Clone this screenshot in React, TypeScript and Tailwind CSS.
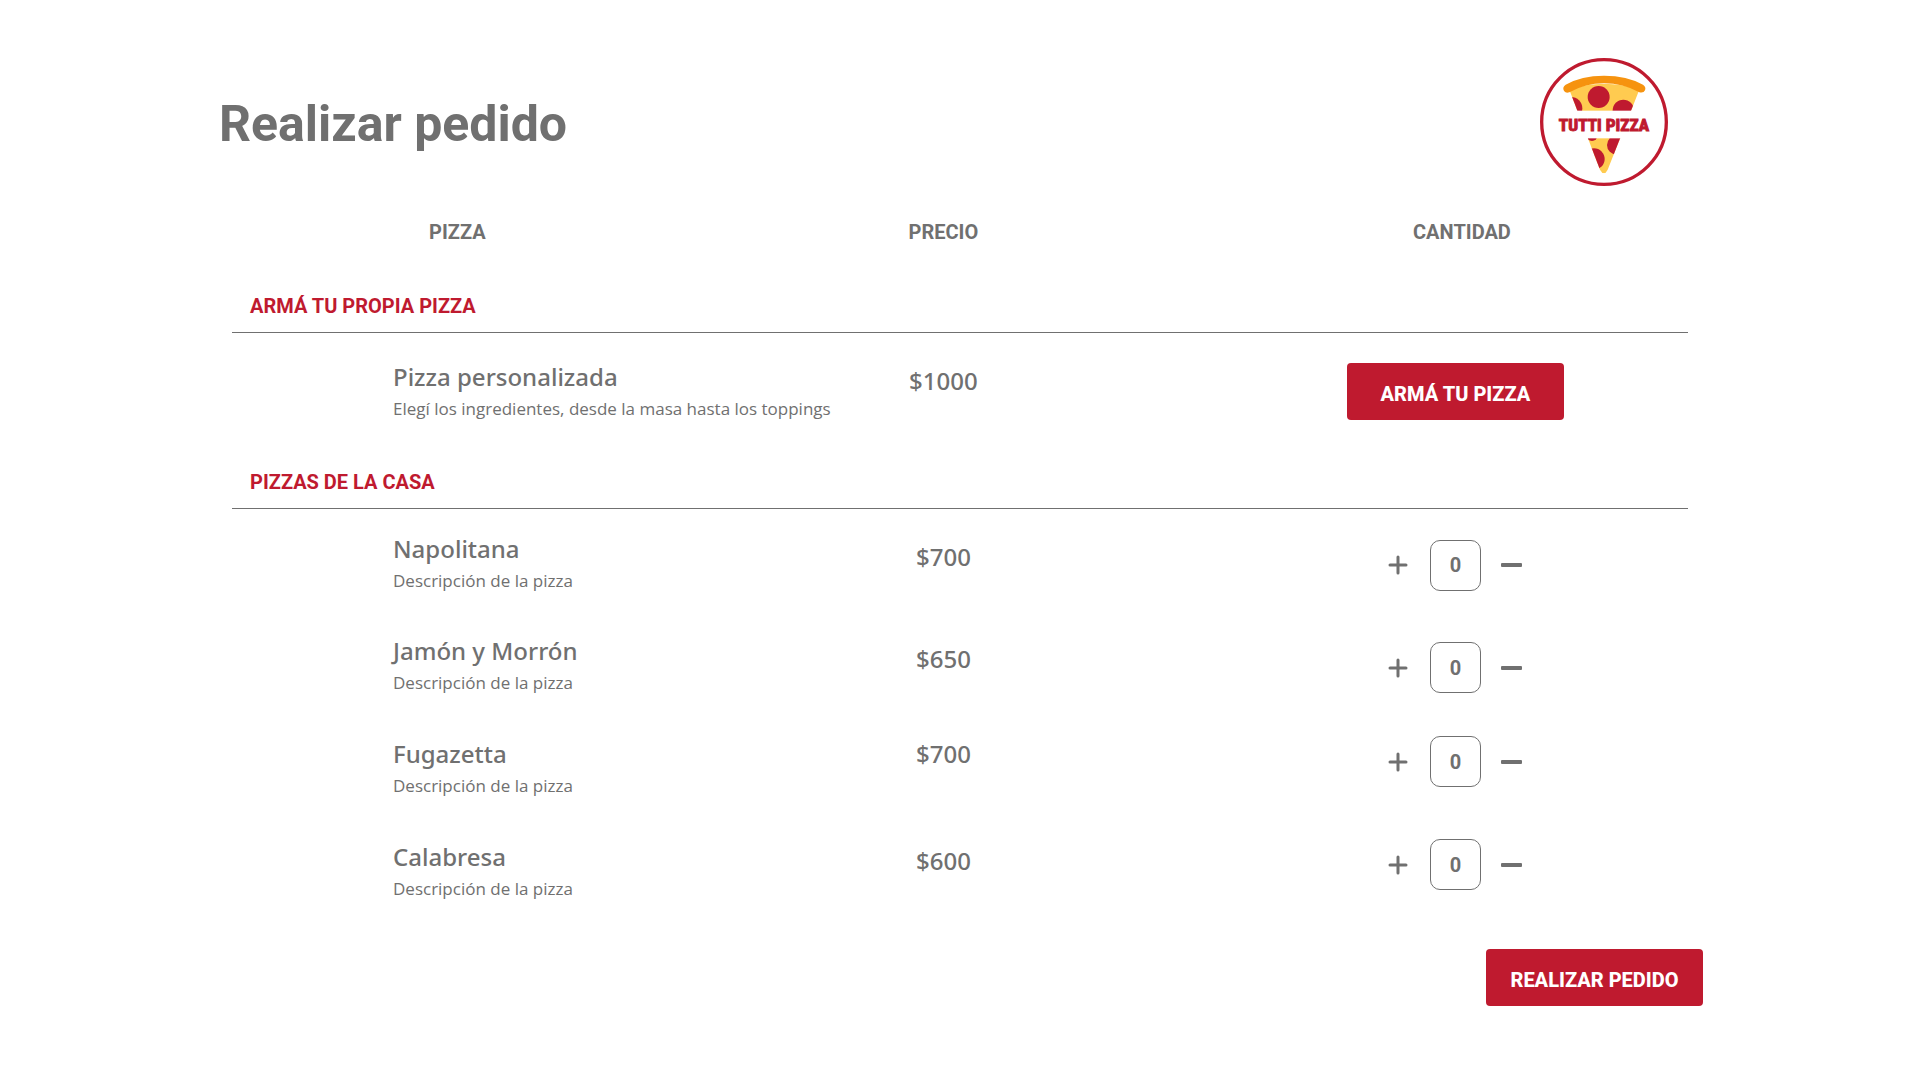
import { useState } from "react";

type Pizza = {
  id: string;
  name: string;
  price: string;
  pricePad: string;
  quantityPad: string;
};

const pizzas: Pizza[] = [
  { id: "napolitana", name: "Napolitana", price: "$700", pricePad: "pt-8", quantityPad: "pt-[31px]" },
  { id: "jamon", name: "Jamón y Morrón", price: "$650", pricePad: "pt-8", quantityPad: "pt-[31px]" },
  { id: "fugazetta", name: "Fugazetta", price: "$700", pricePad: "pt-6", quantityPad: "pt-[22px]" },
  { id: "calabresa", name: "Calabresa", price: "$600", pricePad: "pt-7", quantityPad: "pt-[22px]" },
];

function Logo() {
  return (
    <svg viewBox="31 25 384 384" className="size-32" role="img" aria-label="Tutti Pizza">
      <defs>
        <clipPath id="slice">
          <path d="M119 120 Q223 84 329 120 L234 360 Q223 382 211 360 Z" />
        </clipPath>
      </defs>
      <circle cx="223" cy="217" r="187" fill="#fff" stroke="#bf1a2f" strokeWidth="10" />
      <g clipPath="url(#slice)">
        <rect x="100" y="80" width="250" height="300" fill="#ffcb50" />
        <g fill="#bf1a2f">
          <circle cx="207" cy="142" r="33" />
          <circle cx="124" cy="176" r="34" />
          <circle cx="281" cy="182" r="32" />
          <circle cx="187" cy="257" r="17" />
          <circle cx="261" cy="286" r="29" />
          <circle cx="193" cy="328" r="32" />
        </g>
      </g>
      <path
        d="M108 105 Q155 78 223 78 Q292 78 340 105 Q350 112 346 122 Q342 131 329 128 Q280 101 223 101 Q168 101 119 128 Q106 132 102 122 Q98 112 108 105 Z"
        fill="#f6930f"
      />
      <rect x="80" y="183" width="286" height="83" fill="#fff" />
      <text
        x="223"
        y="245"
        textAnchor="middle"
        fontSize="52"
        fill="#bf1a2f"
        stroke="#bf1a2f"
        strokeWidth="3"
        className="font-['Roboto_Condensed','Open_Sans_Condensed',Roboto,sans-serif] font-bold"
      >
        TUTTI PIZZA
      </text>
    </svg>
  );
}

function SectionRow({ title, pad }: { title: string; pad: string }) {
  return (
    <tr className="border-b border-[#707070]">
      <th scope="colgroup" colSpan={3} className={`pb-3 pl-[18px] text-left text-xl leading-7 font-bold text-[#bf1a2f] ${pad}`}>
        {title}
      </th>
    </tr>
  );
}

function ItemText({ name, description }: { name: string; description: string }) {
  return (
    <>
      <p className="font-['Noto_Sans',sans-serif] text-2xl leading-8 font-medium">{name}</p>
      <p className="text-[17px] leading-8">{description}</p>
    </>
  );
}

function Quantity({ name }: { name: string }) {
  const [value, setValue] = useState(0);
  return (
    <div className="flex items-center justify-center">
      <button type="button" aria-label={`Agregar ${name}`} onClick={() => setValue(value + 1)} className="pr-[22px] pl-5">
        <svg viewBox="0 0 20 20" className="size-5" stroke="#707070" strokeWidth="3" strokeLinecap="round">
          <path d="M10 2V18M2 10H18" />
        </svg>
      </button>
      <input
        type="text"
        inputMode="numeric"
        aria-label={`Cantidad de ${name}`}
        value={value}
        onChange={(e) => setValue(Number(e.target.value) || 0)}
        className="size-[51px] rounded-[10px] border border-[#707070] text-center font-[Roboto,sans-serif] text-xl font-bold"
      />
      <button type="button" aria-label={`Quitar ${name}`} onClick={() => setValue(Math.max(0, value - 1))} className="px-5">
        <svg viewBox="0 0 22 22" className="size-[22px]" fill="#707070">
          <rect x="0" y="9" width="21" height="4" rx="1" />
        </svg>
      </button>
    </div>
  );
}

const buttonStyle = "h-[57px] w-[217px] rounded bg-[#bf1a2f] pt-1 font-[Roboto,sans-serif] text-xl font-extrabold text-white";

export default function App() {
  return (
    <main className="min-h-screen bg-white px-[217px] pt-[58px] pb-16 font-[Roboto,sans-serif] text-[#707070]">
      <header className="flex items-center justify-between pr-[35px] pl-0.5">
        <h1 className="pt-1 text-[50px] leading-none font-bold">Realizar pedido</h1>
        <Logo />
      </header>

      <div className="mx-[15px] mt-8">
        <table className="w-full table-fixed border-collapse">
          <colgroup>
            <col className="w-[41%]" />
            <col className="w-[16%]" />
            <col className="w-[43%]" />
          </colgroup>
          <thead>
            <tr className="text-xl leading-7 font-bold">
              <th scope="col" className="pl-[197px] text-left">PIZZA</th>
              <th scope="col" className="pr-1">PRECIO</th>
              <th scope="col" className="pl-[174px]">CANTIDAD</th>
            </tr>
          </thead>
          <tbody>
            <SectionRow title="ARMÁ TU PROPIA PIZZA" pad="pt-[46px]" />
            <tr className="h-[123px] align-top font-['Open_Sans',sans-serif]">
              <td className="pt-7 pl-[161px] whitespace-nowrap">
                <ItemText name="Pizza personalizada" description="Elegí los ingredientes, desde la masa hasta los toppings" />
              </td>
              <td className="pt-8 pr-1 text-center font-['Noto_Sans',sans-serif] text-2xl leading-8 font-medium">$1000</td>
              <td className="pt-[30px] pl-[161px] text-center">
                <button type="button" className={buttonStyle}>ARMÁ TU PIZZA</button>
              </td>
            </tr>
            <SectionRow title="PIZZAS DE LA CASA" pad="pt-3" />
            {pizzas.map((p) => (
              <tr key={p.id} className="h-[103px] align-top font-['Open_Sans',sans-serif]">
                <td className="pt-6 pl-[161px]">
                  <ItemText name={p.name} description="Descripción de la pizza" />
                </td>
                <td className={`pr-1 text-center font-['Noto_Sans',sans-serif] text-2xl leading-8 font-medium ${p.pricePad}`}>{p.price}</td>
                <td className={`pl-[161px] ${p.quantityPad}`}>
                  <Quantity name={p.name} />
                </td>
              </tr>
            ))}
          </tbody>
        </table>
      </div>

      <div className="mt-[29px] flex justify-end">
        <button type="button" className={buttonStyle}>REALIZAR PEDIDO</button>
      </div>
    </main>
  );
}
